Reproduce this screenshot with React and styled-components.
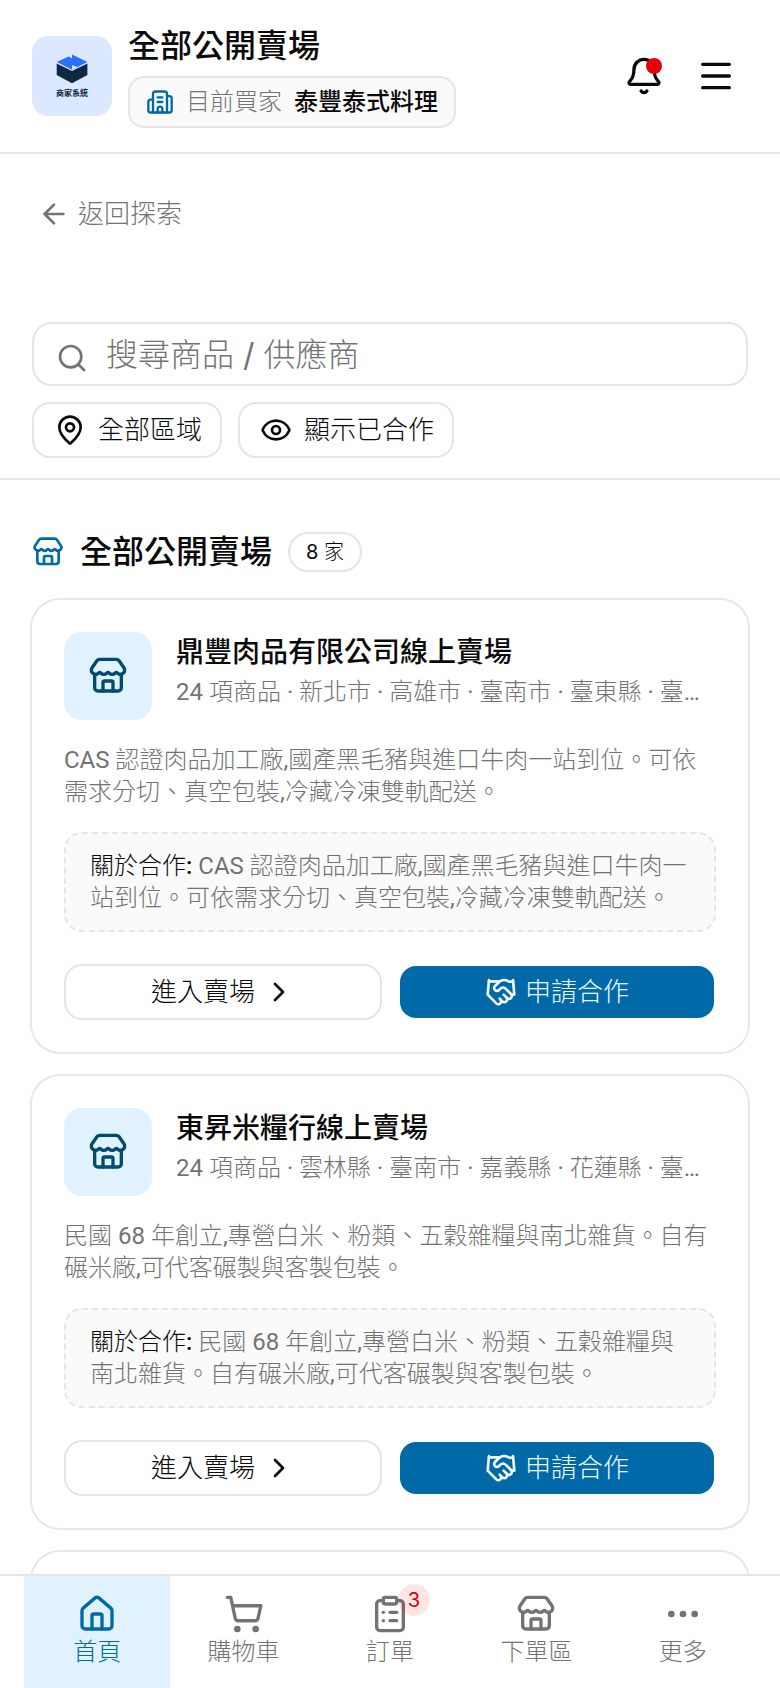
import React from "react";
import styled, { createGlobalStyle, css } from "styled-components";
import {
  ArrowLeft, Bell, Building2, ChevronRight, ClipboardList, Ellipsis, Eye,
  Handshake, House, MapPin, Menu, Search, ShoppingCart, Store,
} from "lucide-react";

const GlobalStyle = createGlobalStyle`
  *, *::before, *::after { box-sizing: border-box; }
  body {
    margin: 0;
    background: #fff;
    color: #0a0a0a;
    font-family: Inter, "Noto Sans CJK TC Light", "Noto Sans CJK TC", sans-serif;
    font-size: 24px;
    line-height: 32px;
  }
  button, input { font: inherit; color: inherit; }
  button { cursor: pointer; }
  h1, h2, h3, p, ul { margin: 0; padding: 0; }
  svg { display: block; flex: none; }
`;

const strong = css`
  font-family: Inter, "Noto Sans CJK TC", sans-serif;
  font-weight: 500;
`;

const prose = css`
  font-family: Roboto, "Noto Sans CJK TC Light", "Noto Sans CJK TC", sans-serif;
  color: #737373;
`;

const Shell = styled.div`
  display: flex;
  flex-direction: column;
  height: 100vh;
`;

const Header = styled.header`
  display: flex;
  align-items: center;
  gap: 16px;
  padding: 24px 32px;
  border-bottom: 2px solid #e5e5e5;
`;

const Logo = styled.div`
  display: flex;
  flex-direction: column;
  align-items: center;
  justify-content: center;
  width: 80px;
  height: 80px;
  border-radius: 16px;
  background: #dbe8fe;
`;

const LogoText = styled.span`
  ${strong}
  font-weight: 700;
  font-size: 8px;
  line-height: 16px;
  color: #0f2740;
`;

const Heading = styled.div`
  display: flex;
  flex-direction: column;
  align-items: flex-start;
  gap: 8px;
  flex: 1;
  min-width: 0;
`;

const PageTitle = styled.h1`
  ${strong}
  font-size: 32px;
  line-height: 44px;
`;

const BuyerPill = styled.div`
  display: flex;
  align-items: center;
  gap: 12px;
  height: 52px;
  padding: 0 16px;
  border: 2px solid #e5e5e5;
  border-radius: 16px;
  background: #fafafa;
  svg { color: #0069a8; }
`;

const Muted = styled.span`
  color: #737373;
`;

const BuyerName = styled.strong`
  ${strong}
`;

const HeaderActions = styled.div`
  display: flex;
  gap: 8px;
`;

const IconButton = styled.button`
  position: relative;
  display: grid;
  place-items: center;
  width: 64px;
  height: 64px;
  padding: 0;
  border: 0;
  background: none;
`;

const AlertDot = styled.span`
  position: absolute;
  top: 14px;
  right: 14px;
  width: 16px;
  height: 16px;
  border-radius: 50%;
  background: #e7000b;
`;

const Main = styled.main`
  flex: 1;
  min-height: 0;
  overflow-y: auto;
  scrollbar-width: none;
`;

const Filters = styled.section`
  padding: 32px 32px 20px;
  border-bottom: 2px solid #e5e5e5;
`;

const BackLink = styled.a`
  display: inline-flex;
  align-items: center;
  gap: 8px;
  height: 56px;
  padding: 0 6px;
  margin-bottom: 80px;
  color: #737373;
  font-size: 26px;
  text-decoration: none;
`;

const SearchBox = styled.label`
  display: flex;
  align-items: flex-end;
  gap: 18px;
  padding: 10px 22px;
  border: 2px solid #e5e5e5;
  border-radius: 20px;
  color: #737373;
`;

const SearchInput = styled.input`
  flex: 1;
  min-width: 0;
  height: 40px;
  padding: 0;
  border: 0;
  outline: 0;
  background: none;
  font-size: 32px;
  &::placeholder { color: #737373; opacity: 1; }
`;

const ChipRow = styled.div`
  display: flex;
  gap: 16px;
  margin-top: 16px;
`;

const Chip = styled.button`
  display: flex;
  align-items: center;
  gap: 12px;
  height: 56px;
  padding: 0 18px 0 20px;
  border: 2px solid #e5e5e5;
  border-radius: 18px;
  background: #fff;
  font-size: 26px;
`;

const Shops = styled.section`
  padding: 52px 32px 0;
`;

const SectionHead = styled.div`
  display: flex;
  align-items: center;
  gap: 16px;
  height: 40px;
  margin-bottom: 28px;
  svg { color: #0069a8; }
`;

const SectionTitle = styled.h2`
  ${strong}
  font-size: 32px;
  line-height: 40px;
`;

const CountBadge = styled.span`
  height: 40px;
  padding: 0 16px;
  border: 2px solid #e5e5e5;
  border-radius: 20px;
  font-size: 20px;
  line-height: 36px;
`;

const CardList = styled.ul`
  display: flex;
  flex-direction: column;
  gap: 24px;
  padding-bottom: 24px;
  list-style: none;
`;

const Card = styled.li`
  display: flex;
  flex-direction: column;
  gap: 24px;
  padding: 32px;
  border-radius: 28px;
  box-shadow: 0 0 0 2px #e7e7e7;
`;

const CardHead = styled.div`
  display: flex;
  align-items: flex-start;
  gap: 24px;
`;

const ShopIcon = styled.div`
  display: grid;
  place-items: center;
  flex: none;
  width: 88px;
  height: 88px;
  border-radius: 18px;
  background: #dff2fe;
  color: #024a70;
`;

const ShopText = styled.div`
  flex: 1;
  min-width: 0;
`;

const ShopName = styled.h3`
  ${strong}
  font-size: 28px;
  line-height: 40px;
`;

const ShopMeta = styled.p`
  ${prose}
  overflow: hidden;
  line-height: 40px;
  text-overflow: ellipsis;
  white-space: nowrap;
`;

const Description = styled.p`
  ${prose}
`;

const Note = styled.p`
  ${prose}
  padding: 16px 24px;
  border: 2px dashed #e5e5e5;
  border-radius: 18px;
  background: #fafafa;
`;

const NoteLabel = styled.span`
  color: #0a0a0a;
  font-weight: 500;
`;

const CardActions = styled.div`
  display: grid;
  grid-template-columns: 1fr 1fr;
  gap: 16px;
  margin-top: 8px;
`;

const ActionButton = styled.button`
  display: flex;
  align-items: center;
  justify-content: center;
  gap: 8px;
  height: 56px;
  padding: 0;
  border: 2px solid ${(p) => (p.$primary ? "transparent" : "#e5e5e5")};
  border-radius: 18px;
  background: ${(p) => (p.$primary ? "#0069a8" : "#fff")};
  background-clip: padding-box;
  color: ${(p) => (p.$primary ? "#f0f9ff" : "#0a0a0a")};
  font-size: 26px;
`;

const TabBar = styled.nav`
  display: grid;
  grid-template-columns: repeat(5, 1fr);
  flex: none;
  height: 114px;
  padding: 0 24px;
  border-top: 2px solid #e5e5e5;
  background: #fff;
`;

const Tab = styled.a`
  display: flex;
  flex-direction: column;
  align-items: center;
  gap: 2px;
  padding-top: 18px;
  background: ${(p) => (p.$active ? "#dff2fe" : "none")};
  color: ${(p) => (p.$active ? "#0069a8" : "#737373")};
  text-decoration: none;
`;

const TabIcon = styled.span`
  position: relative;
`;

const TabBadge = styled.span`
  position: absolute;
  top: -10px;
  right: -20px;
  width: 32px;
  height: 32px;
  border-radius: 50%;
  background: rgba(231, 0, 11, 0.1);
  color: #d0000a;
  font-size: 20px;
  line-height: 32px;
  text-align: center;
`;

const shops = [
  {
    name: "鼎豐肉品有限公司線上賣場",
    meta: "24 項商品 · 新北市 · 高雄市 · 臺南市 · 臺東縣 · 臺中市",
    text: "CAS 認證肉品加工廠,國產黑毛豬與進口牛肉一站到位。可依需求分切、真空包裝,冷藏冷凍雙軌配送。",
  },
  {
    name: "東昇米糧行線上賣場",
    meta: "24 項商品 · 雲林縣 · 臺南市 · 嘉義縣 · 花蓮縣 · 臺東縣",
    text: "民國 68 年創立,專營白米、粉類、五穀雜糧與南北雜貨。自有碾米廠,可代客碾製與客製包裝。",
  },
];

const tabs = [
  { label: "首頁", Icon: House, active: true },
  { label: "購物車", Icon: ShoppingCart },
  { label: "訂單", Icon: ClipboardList, badge: 3 },
  { label: "下單區", Icon: Store },
  { label: "更多", Icon: Ellipsis },
];

function BoxMark() {
  return (
    <svg width="32" height="34" viewBox="0 0 32 34" aria-hidden="true">
      <path d="M0.7 12.5 16 20 31.4 12.5V24L16 32.2 0.7 24Z" fill="#0f2740" />
      <path d="M0.7 11 12.6 5.4 16 7.2V3.4L31.4 11 16 18.8Z" fill="#2970ff" />
      <path d="M16 14 21.4 16 16 18.8Z" fill="#dbe8fe" />
    </svg>
  );
}

function ShopCard({ shop }) {
  return (
    <Card>
      <CardHead>
        <ShopIcon><Store size={40} /></ShopIcon>
        <ShopText>
          <ShopName>{shop.name}</ShopName>
          <ShopMeta>{shop.meta}</ShopMeta>
        </ShopText>
      </CardHead>
      <Description>{shop.text}</Description>
      <Note><NoteLabel>關於合作:</NoteLabel> {shop.text}</Note>
      <CardActions>
        <ActionButton type="button">進入賣場<ChevronRight size={32} /></ActionButton>
        <ActionButton type="button" $primary><Handshake size={32} />申請合作</ActionButton>
      </CardActions>
    </Card>
  );
}

export default function App() {
  return (
    <Shell lang="zh-Hant">
      <GlobalStyle />
      <Header>
        <Logo>
          <BoxMark />
          <LogoText>商家系統</LogoText>
        </Logo>
        <Heading>
          <PageTitle>全部公開賣場</PageTitle>
          <BuyerPill>
            <Building2 size={28} />
            <Muted>目前買家</Muted>
            <BuyerName>泰豐泰式料理</BuyerName>
          </BuyerPill>
        </Heading>
        <HeaderActions>
          <IconButton type="button" aria-label="通知"><Bell size={40} /><AlertDot /></IconButton>
          <IconButton type="button" aria-label="選單"><Menu size={40} /></IconButton>
        </HeaderActions>
      </Header>
      <Main>
        <Filters>
          <BackLink href="#explore"><ArrowLeft size={32} />返回探索</BackLink>
          <SearchBox>
            <Search size={32} />
            <SearchInput type="search" aria-label="搜尋" placeholder="搜尋商品 / 供應商" />
          </SearchBox>
          <ChipRow>
            <Chip type="button"><MapPin size={32} />全部區域</Chip>
            <Chip type="button"><Eye size={32} />顯示已合作</Chip>
          </ChipRow>
        </Filters>
        <Shops>
          <SectionHead>
            <Store size={32} />
            <SectionTitle>全部公開賣場</SectionTitle>
            <CountBadge>8 家</CountBadge>
          </SectionHead>
          <CardList>
            {shops.map((shop) => <ShopCard key={shop.name} shop={shop} />)}
            <Card aria-busy="true" />
          </CardList>
        </Shops>
      </Main>
      <TabBar>
        {tabs.map(({ label, Icon, active, badge }) => (
          <Tab key={label} href="#" $active={active} aria-current={active ? "page" : undefined}>
            <TabIcon>
              <Icon size={40} />
              {badge && <TabBadge>{badge}</TabBadge>}
            </TabIcon>
            {label}
          </Tab>
        ))}
      </TabBar>
    </Shell>
  );
}
